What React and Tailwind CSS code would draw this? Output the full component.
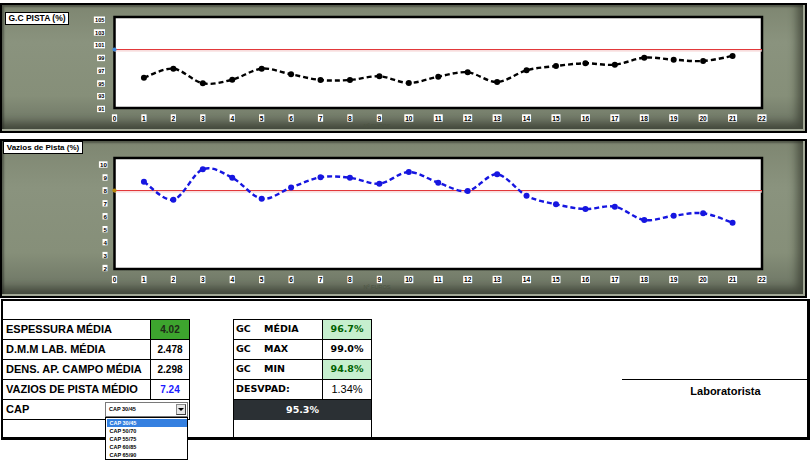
const gcPista = [95.66, 97.05, 94.8, 95.35, 97.05, 96.18, 95.31, 95.31, 95.88, 94.85, 95.82, 96.49, 95.0, 96.8, 97.46, 97.88, 97.66, 98.74, 98.43, 98.23, 99.0];
const vazios = [8.68, 7.29, 9.64, 8.99, 7.37, 8.23, 9.02, 8.99, 8.53, 9.43, 8.6, 7.96, 9.25, 7.59, 6.93, 6.57, 6.75, 5.72, 6.05, 6.24, 5.51];

const X0 = 114.5;
const X_END = 762;
const STEP = (X_END - X0) / 22;
const xOf = (i) => X0 + i * STEP;

// catmull-rom -> bezier, close to excel's smoothed line
function smoothPath(pts) {
  let d = `M${pts[0][0]},${pts[0][1]}`;
  for (let i = 0; i < pts.length - 1; i++) {
    const p0 = pts[i - 1] || pts[i];
    const p1 = pts[i];
    const p2 = pts[i + 1];
    const p3 = pts[i + 2] || p2;
    const c1x = p1[0] + (p2[0] - p0[0]) / 6;
    const c1y = p1[1] + (p2[1] - p0[1]) / 6;
    const c2x = p2[0] - (p3[0] - p1[0]) / 6;
    const c2y = p2[1] - (p3[1] - p1[1]) / 6;
    d += ` C${c1x},${c1y} ${c2x},${c2y} ${p2[0]},${p2[1]}`;
  }
  return d;
}

function Chart({ vx, vy, w, h, top, bottom, refY, refDot, yOf, data, color, yLabels, yRight, yFont, xLabelY, titleY }) {
  const pts = data.map((v, i) => [xOf(i + 1), yOf(v)]);
  const font = "Liberation Sans, Arial, sans-serif";
  return (
    <svg width={w} height={h} viewBox={`${vx} ${vy} ${w} ${h}`} className="block shrink-0">
      <rect x={X0} y={top} width={X_END - X0} height={bottom - top} fill="#fff" stroke="#000" strokeWidth="2.5" />
      <line x1={X0} x2={X_END} y1={refY + 1.3} y2={refY + 1.3} stroke="#f6d2d2" strokeWidth="1.2" />
      <line x1={X0} x2={X_END} y1={refY} y2={refY} stroke="#e2383a" strokeWidth="1.2" />
      <circle cx={X0} cy={refY} r="2.1" fill={refDot} />
      <path d={smoothPath(pts)} fill="none" stroke={color} strokeWidth="2.4" strokeDasharray="5 3" />
      {pts.map(([x, y], i) => (
        <circle key={i} cx={x} cy={y} r="3" fill={color} />
      ))}
      {yLabels.map(({ v, cy }) => {
        const tw = String(v).length * yFont * 0.58 + 1.4;
        return (
          <g key={v}>
            <rect x={yRight - tw} y={cy - 3.2} width={tw} height="6.4" fill="#fff" />
            <text x={yRight - 0.6} y={cy + 0.2} fontSize={yFont} fontWeight="bold" fontFamily={font} textAnchor="end" dominantBaseline="central" fill="#000">
              {v}
            </text>
          </g>
        );
      })}
      {Array.from({ length: 23 }, (_, i) => {
        const tw = String(i).length * 3.8 + 1.4;
        const x = xOf(i);
        return (
          <g key={i}>
            <rect x={x - tw / 2} y={xLabelY - 3.7} width={tw} height="7.4" fill="#fff" />
            <text x={x} y={xLabelY + 0.3} fontSize="6.6" fontWeight="bold" fontFamily={font} textAnchor="middle" dominantBaseline="central" fill="#000">
              {i}
            </text>
          </g>
        );
      })}
      <text x="377" y={titleY} fontSize="5.5" fontFamily={font} textAnchor="middle" fill="#4b5342">
        Nº FUROS
      </text>
    </svg>
  );
}

function Select() {
  const opts = ["CAP 30/45", "CAP 50/70", "CAP 55/75", "CAP 60/85", "CAP 65/90"];
  return (
    <div className="relative w-[83px] h-[15px] border border-[#7a7a7a] bg-white flex items-center justify-between">
      <span className="pl-[3px] text-[5.5px] font-bold leading-none">CAP 30/45</span>
      <span className="mr-[1px] w-[10px] h-[11px] bg-[#e6e6e6] border border-[#8a8a8a] border-r-[#404040] border-b-[#404040] flex items-center justify-center">
        <span className="w-0 h-0 border-l-[3px] border-r-[3px] border-t-[3px] border-l-transparent border-r-transparent border-t-black" />
      </span>
      <div className="absolute left-[-1px] top-[14px] w-[83px] border border-black bg-white z-10 py-[0.5px]">
        {opts.map((o, i) => (
          <div
            key={o}
            className={
              i === 0
                ? "h-[8px] mx-[0.5px] pl-[3px] bg-[#3580e0] text-white text-[5.5px] font-bold leading-[8px]"
                : "h-[8px] mx-[0.5px] pl-[3px] text-black text-[5.5px] font-bold leading-[8px]"
            }
          >
            {o}
          </div>
        ))}
      </div>
    </div>
  );
}

function LeftRow({ label, value, valueClass }) {
  return (
    <div className="flex h-[20px] border-b border-black">
      <div className="w-[147px] pl-[3px] flex items-center text-[11px] font-bold">{label}</div>
      <div className={`w-[39px] border-l border-black flex items-center justify-center text-[10px] font-bold ${valueClass}`}>
        {value}
      </div>
    </div>
  );
}

function GcRow({ a, b, value, valueClass }) {
  return (
    <div className="flex h-[20px] border-b border-black font-['DejaVu_Sans',sans-serif]">
      <div className="w-[88px] pl-[2px] flex items-center text-[9.5px] font-bold">
        <span className="w-[28px]">{a}</span>
        <span>{b}</span>
      </div>
      <div className={`flex-1 border-l border-black flex items-center justify-center text-[9.5px] font-bold ${valueClass}`}>
        {value}
      </div>
    </div>
  );
}

const panel =
  "w-[807px] border-2 border-black flex bg-[linear-gradient(180deg,#7e8671_0%,#8a937e_30%,#868f79_72%,#687060_100%)] shadow-[inset_-2px_-2px_0_#a3a997,inset_-8px_-8px_9px_rgba(40,44,34,0.6),inset_2px_2px_2px_rgba(0,0,0,0.35)]";

export default function App() {
  return (
    <div className="w-[812px] h-[466px] bg-white overflow-hidden pt-[3px] font-['Liberation_Sans',Arial,sans-serif] text-black">
      <div className={`${panel} h-[130px]`}>
        <div className="ml-[3px] mt-[7px] w-[64px] h-[13px] shrink-0 border border-black bg-white text-[8.5px] font-bold leading-[11px] text-center">
          G.C PISTA (%)
        </div>
        <Chart
          vx={69}
          vy={5}
          w={736}
          h={126}
          top={17}
          bottom={108}
          refY={49.5}
          refDot="#3f86d8"
          yOf={(v) => 17 + (105 - v) * 6.5}
          data={gcPista}
          color="#000"
          yLabels={[105, 103, 101, 99, 97, 95, 93, 91].map((v, k) => ({ v, cy: 19.7 + k * 12.75 }))}
          yRight={105}
          yFont={5.6}
          xLabelY={118}
          titleY={127.5}
        />
      </div>

      <div className={`${panel} mt-[6px] h-[159px]`}>
        <div className="ml-[1px] w-[80px] h-[13px] shrink-0 border border-black bg-white text-[8px] font-bold leading-[11px] text-center">
          Vazios de Pista (%)
        </div>
        <Chart
          vx={83}
          vy={141}
          w={722}
          h={155}
          top={158}
          bottom={269}
          refY={190.5}
          refDot="#b8860b"
          yOf={(v) => 190.5 - (v - 8) * 12.94}
          data={vazios}
          color="#1616e0"
          yLabels={[10, 9, 8, 7, 6, 5, 4, 3, 2].map((v, k) => ({ v, cy: 164.5 + k * 12.94 }))}
          yRight={107.5}
          yFont={6.2}
          xLabelY={279.5}
          titleY={289}
        />
      </div>

      <div className="mt-[1px] ml-[1px] w-[809px] h-[141px] border-2 border-r-[3px] border-b-[3px] border-black flex items-start">
        <div className="mt-[18px] w-[187px] shrink-0 border-t border-r border-black">
          <LeftRow label="ESPESSURA MÉDIA" value="4.02" valueClass="bg-[#3da52e] text-[#1f2a18]" />
          <LeftRow label="D.M.M LAB. MÉDIA" value="2.478" valueClass="" />
          <LeftRow label="DENS. AP. CAMPO MÉDIA" value="2.298" valueClass="" />
          <LeftRow label="VAZIOS DE PISTA MÉDIO" value="7.24" valueClass="text-[#1a1aff]" />
          <div className="flex h-[20px] border-b border-black items-center">
            <div className="w-[102px] pl-[3px] text-[11px] font-bold">CAP</div>
            <Select />
          </div>
        </div>

        <div className="ml-[43px] mt-[18px] w-[139px] self-stretch shrink-0 flex flex-col border-x border-t border-black">
          <GcRow a="GC" b="MÉDIA" value="96.7%" valueClass="bg-[#c6efce] text-[#006100]" />
          <GcRow a="GC" b="MAX" value="99.0%" valueClass="" />
          <GcRow a="GC" b="MIN" value="94.8%" valueClass="bg-[#c6efce] text-[#006100]" />
          <div className="flex h-[20px] border-b border-black">
            <div className="w-[88px] pl-[2px] flex items-center text-[9.5px] font-bold font-['DejaVu_Sans',sans-serif]">DESVPAD:</div>
            <div className="flex-1 border-l border-black flex items-center justify-center text-[11px]">1.34%</div>
          </div>
          <div className="h-[20px] bg-[#2b3034] text-white flex items-center justify-center text-[9.5px] font-bold font-['DejaVu_Sans',sans-serif]">
            95.3%
          </div>
          <div className="flex-1" />
        </div>

        <div className="ml-auto mt-[78px] w-[185px] border-t border-black">
          <div className="pt-[3px] pl-[22px] text-center text-[11px] font-bold">Laboratorista</div>
        </div>
      </div>
    </div>
  );
}
